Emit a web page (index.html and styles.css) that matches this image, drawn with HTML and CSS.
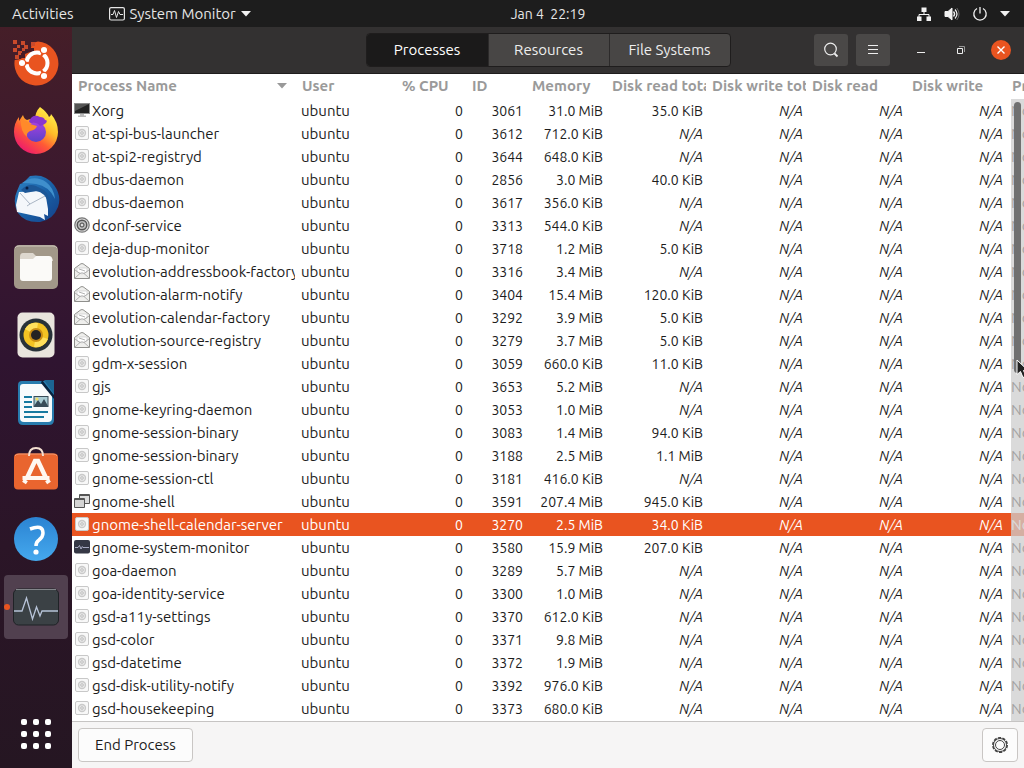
FILE: index.html
```html
<!DOCTYPE html>
<html lang="en">
<head>
<meta charset="utf-8">
<title>System Monitor</title>
<link rel="stylesheet" href="styles.css">
</head>
<body>
<svg class="sprite" aria-hidden="true">
  <symbol id="gear" viewBox="0 0 16 16">
    <rect x="1.500" y="1.500" width="13" height="13" rx="1.500" fill="#f8f8f8" stroke="#c8c8c8"/>
    <circle cx="8" cy="8" r="3.500" fill="#e8e8e8" stroke="#cacaca" stroke-width="1.300"/>
    <circle cx="8" cy="8" r="1.300" fill="#f4f4f4" stroke="#b0b0b0" stroke-width=".8"/>
  </symbol>
  <symbol id="screen" viewBox="0 0 16 16">
    <rect x="0" y="1" width="16" height="11" fill="#8d8d8d"/>
    <rect x="1" y="2" width="14" height="9" fill="#222"/>
    <path d="M1 2h14L1 9z" fill="#555"/>
    <path d="M6 12h4v1.500h2V15H4v-1.500h2z" fill="#bbb"/>
  </symbol>
  <symbol id="dconf" viewBox="0 0 16 16">
    <circle cx="8" cy="8" r="7.200" fill="#ddd" stroke="#777" stroke-width="1.200"/>
    <circle cx="8" cy="8" r="4.800" fill="#bbb" stroke="#555" stroke-width="1.400"/>
    <circle cx="8" cy="8" r="2" fill="#ddd" stroke="#444"/>
  </symbol>
  <symbol id="mail" viewBox="0 0 16 16">
    <path d="M.5 5.500 7 .7h2l6.500 4.800v10H.5z" fill="#efefed" stroke="#8f8f8c"/>
    <path d="M3 5h10v4l-5 2-5-2z" fill="#fff" stroke="#ccc" stroke-width=".7"/>
    <path d="m1 15 5-4.500L1 7m14 8-5-4.500L15 7M6 10.500q2-1.500 4 0M5 6l6 2" fill="none" stroke="#aaa" stroke-width=".9"/>
  </symbol>
  <symbol id="windows" viewBox="0 0 16 16">
    <path d="M5.500 1.500h10v9h-10z" fill="#ddd" stroke="#555"/>
    <path d="M5 2.500h11" stroke="#555"/>
    <path d="M.5 5.500h10v9H.5z" fill="#d5d5d5" stroke="#555"/>
    <path d="M0 6.500h11" stroke="#555"/>
  </symbol>
  <symbol id="monitor" viewBox="0 0 16 16">
    <rect x="0" y="1" width="16" height="13.500" rx="2" fill="#353745"/>
    <path d="M1 8.500h3l1.500-2 1.500 3.500 1.300-2.500.7 1h6" fill="none" stroke="#b4b7d0" stroke-width=".9"/>
  </symbol>
</svg>

<header class="topbar">
  <div class="topbar-left">
    <button class="plain">Activities</button>
    <button class="plain app-menu">
      <svg width="16" height="14" viewBox="0 0 16 14" fill="none" stroke="#e6e6e6"><rect x=".6" y=".6" width="14.800" height="12.400" rx="1.500" stroke-width="1.200"/><path d="M2 7.500h2l1.500-4 2 7 2-6 1.500 3h3"/></svg>
      System Monitor
      <svg width="10" height="6" viewBox="0 0 10 6"><path d="M0 0h10L5 5.500z" fill="#f2f2f2"/></svg>
    </button>
  </div>
  <button class="plain clock">Jan 4&nbsp; 22:19</button>
  <button class="plain status" aria-label="System menu">
    <svg width="16" height="16" viewBox="0 0 16 16"><path d="M5.500 1.500h5v4.500h-5zM1 10.500h4.500V15H1zM10.500 10.500H15V15h-4.500z" fill="#f2f2f2"/><path d="M8 6v3M3 11V8.500h10V11" fill="none" stroke="#f2f2f2"/></svg>
    <svg width="16" height="16" viewBox="0 0 16 16" fill="none" stroke="#f2f2f2"><path d="M1 5.500h3L8 2v12l-4-3.500H1z" fill="#f2f2f2"/><path d="M9.500 5.500q2.200 2.500 0 5" stroke-width="1.300"/><path d="M11 3.500q4 4.500 0 9" stroke-width="1.200"/><path d="M12.800 2q4.500 6 0 12" opacity=".35"/></svg>
    <svg width="16" height="16" viewBox="0 0 16 16" fill="none" stroke="#f2f2f2" stroke-width="1.300"><path d="M5 2.500a6.200 6.200 0 1 0 6 0M8 1v6.500"/></svg>
    <svg width="10" height="6" viewBox="0 0 10 6"><path d="M0 0h10L5 5.500z" fill="#f2f2f2"/></svg>
  </button>
</header>

<div class="desktop">
<nav class="dock" aria-label="Dock">
  <button class="dock-item" aria-label="Ubuntu">
    <svg width="48" height="48" viewBox="0 0 48 48"><path d="M26 2.500A22 22 0 1 1 2.700 21L9 20l4-5 5-2 2-9z" fill="#e95420"/><g fill="#c94a2b"><path d="M1 1h4v4H1zM9 2h4v4H9zM5 6h3v3H5zM1 9h4v4H1zM12 6h4v4h-4zM19 3h4v4h-4zM6 12h4v4H6zM3 16h4v4H3zM10 9h3v3h-3z"/></g><path d="M16 9h6v4h-6zM9 14h4v5H9z" fill="#4a1b25"/><circle cx="25" cy="24" r="10.500" fill="none" stroke="#fff" stroke-width="4" stroke-dasharray="19.500 2.500" stroke-dashoffset="-12"/><g fill="#fff" stroke="#e95420" stroke-width="1.300"><circle cx="10" cy="24" r="3.700"/><circle cx="32" cy="11" r="3.700"/><circle cx="32" cy="37" r="3.700"/></g></svg>
  </button>
  <button class="dock-item" aria-label="Firefox">
    <svg width="48" height="48" viewBox="0 0 48 48"><defs><linearGradient id="fx" x1=".85" y1=".1" x2=".25" y2=".95"><stop offset="0" stop-color="#fff04b"/><stop offset=".35" stop-color="#ffbd29"/><stop offset=".65" stop-color="#ff5a35"/><stop offset="1" stop-color="#ee1d6b"/></linearGradient><linearGradient id="fp" x1="0" y1="0" x2="0" y2="1"><stop offset="0" stop-color="#a541e0"/><stop offset="1" stop-color="#5b42c8"/></linearGradient></defs><path d="M28 0q7 5 9 10 2-1 2-3 7 8 7 18a22 22 0 0 1-44 0q0-9 5-15v4l4-6q1 4 4 5 5-2 8 0 0-8 5-13z" fill="url(#fx)"/><circle cx="24" cy="25" r="10" fill="url(#fp)"/><path d="M17 14q4-8 11-4 4 0 5 3 3 0 1 3-2 2-6 3-3-4-8-3-3 0-3-2z" fill="#8a35cf"/><path d="M9 13q6 0 9 4l7 2q-1 4-7 5-4 2-3 6-7-6-6-17z" fill="#ff8a2a"/></svg>
  </button>
  <button class="dock-item" aria-label="Thunderbird">
    <svg width="48" height="48" viewBox="0 0 48 48"><defs><linearGradient id="tb" x1="0" y1="0" x2="1" y2="1"><stop offset="0" stop-color="#2f83c5"/><stop offset=".5" stop-color="#1a62a8"/><stop offset="1" stop-color="#143f88"/></linearGradient></defs><path d="M18 1q15-3 24 9 8 11 4 22-5 13-18 15-15 1-22-9-6-11-1-22l3-7 3-1z" fill="url(#tb)"/><path d="M10 8Q22-1 34 7q8 6 9 17Q37 11 24 9q-8-1-14-1z" fill="#3f8fcc"/><path d="m7 17 21-1q6 1 6 6l2 12v7l-4-2 1 6-5-3-23-5-1-7z" fill="#f4f7fb"/><path d="m8 18 10 11 15-8M18 29l-3 2" fill="none" stroke="#aab6c5"/><path d="M9 15q7-7 15-4l8 4q6 5 5 14-4-12-13-13l-11 2z" fill="#1c5797"/><circle cx="15" cy="13" r="1.500" fill="#071e44"/></svg>
  </button>
  <button class="dock-item" aria-label="Files">
    <svg width="48" height="48" viewBox="0 0 48 48"><rect x="2" y="2" width="44" height="44" rx="5" fill="#a29889"/><path d="M3 5q1-2 4-2h34q3 0 4 2" fill="none" stroke="#c9c2b7"/><path d="M8 14q0-4 3-4h10l4 4h12q4 0 4 4H8z" fill="#ddd7ce"/><path d="M8 16h13l3-3h13q3 0 3 3v19q0 3-3 3H11q-3 0-3-3z" fill="#fbfaf8"/></svg>
  </button>
  <button class="dock-item" aria-label="Rhythmbox">
    <svg width="48" height="48" viewBox="0 0 48 48"><rect x="5.500" y="1.500" width="37" height="45" rx="5" fill="#e9e5dd"/><circle cx="24" cy="24" r="16.500" fill="#283238"/><circle cx="24" cy="24" r="12.500" fill="#f3c323"/><path d="M24 24 13 18a12.500 12.500 0 0 1 13-6zM24 24l12 4a12.500 12.500 0 0 1-14 8z" fill="#ffe05c"/><circle cx="24" cy="24" r="7" fill="#c98d13"/><circle cx="24" cy="24" r="5" fill="#252323"/></svg>
  </button>
  <button class="dock-item" aria-label="LibreOffice Writer">
    <svg width="48" height="48" viewBox="0 0 48 48"><path d="M10 2h25l7 9v30q0 5-5 5H11q-5 0-5-5V6q0-4 4-4z" fill="#287cae"/><path d="M11 5h21l8 11v23q0 4-4 4H12q-4 0-4-4V8q0-3 3-3z" fill="#f8fbfc"/><path d="M32 1h10v14z" fill="#1c6593"/><path d="m30 1 12 15v4L29 4z" fill="#082340"/><path d="M12 18h8m-8 5h8m-8 5h8m-8 5h24m-24 5h20" stroke="#177aa0" stroke-width="1.800"/><rect x="22" y="17.500" width="14" height="10" fill="#a9ccd4" stroke="#394d59"/><path d="m22 27 4-6 3 4 3-5 4 7z" fill="#394d59"/><circle cx="25" cy="20" r="1.500" fill="#f4df62"/></svg>
  </button>
  <button class="dock-item" aria-label="Ubuntu Software">
    <svg width="48" height="48" viewBox="0 0 48 48"><rect x="2" y="6.500" width="44" height="36" rx="4" fill="#e9652f"/><path d="M3 9q1-2 4-2h34q3 0 4 2" fill="none" stroke="#f39a70"/><path d="M17 9q0-8 7-8t7 8" fill="none" stroke="#f4dfd0" stroke-width="2"/><path d="M15 31 23 14h3l8 17M12 36l2-3m21 0 2 3" fill="none" stroke="#fff8f2" stroke-width="4.500"/><path d="M10.500 29h27v4h-27z" fill="#fff8f2"/></svg>
  </button>
  <button class="dock-item" aria-label="Help">
    <svg width="48" height="48" viewBox="0 0 48 48"><defs><linearGradient id="hp" x1="0" y1="0" x2="0" y2="1"><stop offset="0" stop-color="#2b83d2"/><stop offset="1" stop-color="#45a9ee"/></linearGradient></defs><circle cx="24" cy="24" r="22" fill="url(#hp)"/><path d="M18 14q13-5 13 4 0 4-4 7-3 2-3 6" fill="none" stroke="#fff" stroke-width="3.500"/><circle cx="24" cy="37" r="2.600" fill="#fff"/></svg>
  </button>
  <button class="dock-item running" aria-label="System Monitor">
    <svg width="48" height="48" viewBox="0 0 48 48"><rect x="1.500" y="6" width="45" height="36" rx="5" fill="#3b4145" stroke="#1f2226"/><path d="M4 6.500h40" stroke="#82868a"/><path d="M2 28h8l4.500-13 6 21 4-12 3.500 9 2-5h16" fill="none" stroke="#b7c3d8" stroke-width="1.300"/></svg>
  </button>
  <button class="dock-apps" aria-label="Show Applications">
    <i></i><i></i><i></i><i></i><i></i><i></i><i></i><i></i><i></i>
  </button>
</nav>

<main class="window">
  <div class="headerbar">
    <div class="tabs">
      <button class="tab active">Processes</button>
      <button class="tab">Resources</button>
      <button class="tab">File Systems</button>
    </div>
    <div class="actions">
      <button class="tool" aria-label="Search"><svg width="16" height="16" viewBox="0 0 16 16" fill="none" stroke="#eee" stroke-width="1.200"><circle cx="7.500" cy="7" r="5.800"/><path d="m11.500 11.500 3 3" stroke-width="1.800"/></svg></button>
      <button class="tool" aria-label="Menu"><svg width="16" height="16" viewBox="0 0 16 16" stroke="#eee"><path d="M3 3.500h10M3 7.500h10M3 11.500h10"/></svg></button>
      <div class="controls">
        <button class="control" aria-label="Minimize"><svg width="8" height="8" viewBox="0 0 8 8"><path d="M0 6.500h8" stroke="#eee"/></svg></button>
        <button class="control" aria-label="Restore"><svg width="8" height="8" viewBox="0 0 8 8" fill="none"><path d="M2 .5h5.500V6" stroke="#999"/><path d="M.5 2.500h5v5h-5z" stroke="#eee"/></svg></button>
        <button class="control close" aria-label="Close"><svg width="8" height="8" viewBox="0 0 8 8"><path d="m.5.5 7 7m0-7-7 7" stroke="#fff" stroke-width="1.400"/></svg></button>
      </div>
    </div>
  </div>

  <div class="process-list">
    <table class="processes">
      <colgroup><col class="c-name"><col class="c-wide"><col class="c-cpu"><col class="c-id"><col class="c-mem"><col class="c-wide"><col class="c-wide"><col class="c-wide"><col class="c-wide"><col class="c-mem"></colgroup>
      <thead>
        <tr><th><span class="sorted">Process Name <svg width="10" height="6" viewBox="0 0 10 6"><path d="M0 0h10L5 5.500z" fill="#999"/></svg></span></th><th>User</th><th class="end">% CPU</th><th>ID</th><th>Memory</th><th>Disk read total</th><th>Disk write total</th><th>Disk read</th><th>Disk write</th><th>Priority</th></tr>
      </thead>
      <tbody>
        <tr><td><svg><use href="#screen"/></svg>Xorg</td><td>ubuntu</td><td>0</td><td>3061</td><td>31.0 MiB</td><td>35.0 KiB</td><td><em>N/A</em></td><td><em>N/A</em></td><td><em>N/A</em></td><td>Normal</td></tr>
        <tr><td><svg><use href="#gear"/></svg>at-spi-bus-launcher</td><td>ubuntu</td><td>0</td><td>3612</td><td>712.0 KiB</td><td><em>N/A</em></td><td><em>N/A</em></td><td><em>N/A</em></td><td><em>N/A</em></td><td>Normal</td></tr>
        <tr><td><svg><use href="#gear"/></svg>at-spi2-registryd</td><td>ubuntu</td><td>0</td><td>3644</td><td>648.0 KiB</td><td><em>N/A</em></td><td><em>N/A</em></td><td><em>N/A</em></td><td><em>N/A</em></td><td>Normal</td></tr>
        <tr><td><svg><use href="#gear"/></svg>dbus-daemon</td><td>ubuntu</td><td>0</td><td>2856</td><td>3.0 MiB</td><td>40.0 KiB</td><td><em>N/A</em></td><td><em>N/A</em></td><td><em>N/A</em></td><td>Normal</td></tr>
        <tr><td><svg><use href="#gear"/></svg>dbus-daemon</td><td>ubuntu</td><td>0</td><td>3617</td><td>356.0 KiB</td><td><em>N/A</em></td><td><em>N/A</em></td><td><em>N/A</em></td><td><em>N/A</em></td><td>Normal</td></tr>
        <tr><td><svg><use href="#dconf"/></svg>dconf-service</td><td>ubuntu</td><td>0</td><td>3313</td><td>544.0 KiB</td><td><em>N/A</em></td><td><em>N/A</em></td><td><em>N/A</em></td><td><em>N/A</em></td><td>Normal</td></tr>
        <tr><td><svg><use href="#gear"/></svg>deja-dup-monitor</td><td>ubuntu</td><td>0</td><td>3718</td><td>1.2 MiB</td><td>5.0 KiB</td><td><em>N/A</em></td><td><em>N/A</em></td><td><em>N/A</em></td><td>Normal</td></tr>
        <tr><td><svg><use href="#mail"/></svg>evolution-addressbook-factory</td><td>ubuntu</td><td>0</td><td>3316</td><td>3.4 MiB</td><td><em>N/A</em></td><td><em>N/A</em></td><td><em>N/A</em></td><td><em>N/A</em></td><td>Normal</td></tr>
        <tr><td><svg><use href="#mail"/></svg>evolution-alarm-notify</td><td>ubuntu</td><td>0</td><td>3404</td><td>15.4 MiB</td><td>120.0 KiB</td><td><em>N/A</em></td><td><em>N/A</em></td><td><em>N/A</em></td><td>Normal</td></tr>
        <tr><td><svg><use href="#mail"/></svg>evolution-calendar-factory</td><td>ubuntu</td><td>0</td><td>3292</td><td>3.9 MiB</td><td>5.0 KiB</td><td><em>N/A</em></td><td><em>N/A</em></td><td><em>N/A</em></td><td>Normal</td></tr>
        <tr><td><svg><use href="#mail"/></svg>evolution-source-registry</td><td>ubuntu</td><td>0</td><td>3279</td><td>3.7 MiB</td><td>5.0 KiB</td><td><em>N/A</em></td><td><em>N/A</em></td><td><em>N/A</em></td><td>Normal</td></tr>
        <tr><td><svg><use href="#gear"/></svg>gdm-x-session</td><td>ubuntu</td><td>0</td><td>3059</td><td>660.0 KiB</td><td>11.0 KiB</td><td><em>N/A</em></td><td><em>N/A</em></td><td><em>N/A</em></td><td>Normal</td></tr>
        <tr><td><svg><use href="#gear"/></svg>gjs</td><td>ubuntu</td><td>0</td><td>3653</td><td>5.2 MiB</td><td><em>N/A</em></td><td><em>N/A</em></td><td><em>N/A</em></td><td><em>N/A</em></td><td>Normal</td></tr>
        <tr><td><svg><use href="#gear"/></svg>gnome-keyring-daemon</td><td>ubuntu</td><td>0</td><td>3053</td><td>1.0 MiB</td><td><em>N/A</em></td><td><em>N/A</em></td><td><em>N/A</em></td><td><em>N/A</em></td><td>Normal</td></tr>
        <tr><td><svg><use href="#gear"/></svg>gnome-session-binary</td><td>ubuntu</td><td>0</td><td>3083</td><td>1.4 MiB</td><td>94.0 KiB</td><td><em>N/A</em></td><td><em>N/A</em></td><td><em>N/A</em></td><td>Normal</td></tr>
        <tr><td><svg><use href="#gear"/></svg>gnome-session-binary</td><td>ubuntu</td><td>0</td><td>3188</td><td>2.5 MiB</td><td>1.1 MiB</td><td><em>N/A</em></td><td><em>N/A</em></td><td><em>N/A</em></td><td>Normal</td></tr>
        <tr><td><svg><use href="#gear"/></svg>gnome-session-ctl</td><td>ubuntu</td><td>0</td><td>3181</td><td>416.0 KiB</td><td><em>N/A</em></td><td><em>N/A</em></td><td><em>N/A</em></td><td><em>N/A</em></td><td>Normal</td></tr>
        <tr><td><svg><use href="#windows"/></svg>gnome-shell</td><td>ubuntu</td><td>0</td><td>3591</td><td>207.4 MiB</td><td>945.0 KiB</td><td><em>N/A</em></td><td><em>N/A</em></td><td><em>N/A</em></td><td>Normal</td></tr>
        <tr class="selected"><td><svg><use href="#gear"/></svg>gnome-shell-calendar-server</td><td>ubuntu</td><td>0</td><td>3270</td><td>2.5 MiB</td><td>34.0 KiB</td><td><em>N/A</em></td><td><em>N/A</em></td><td><em>N/A</em></td><td>Normal</td></tr>
        <tr><td><svg><use href="#monitor"/></svg>gnome-system-monitor</td><td>ubuntu</td><td>0</td><td>3580</td><td>15.9 MiB</td><td>207.0 KiB</td><td><em>N/A</em></td><td><em>N/A</em></td><td><em>N/A</em></td><td>Normal</td></tr>
        <tr><td><svg><use href="#gear"/></svg>goa-daemon</td><td>ubuntu</td><td>0</td><td>3289</td><td>5.7 MiB</td><td><em>N/A</em></td><td><em>N/A</em></td><td><em>N/A</em></td><td><em>N/A</em></td><td>Normal</td></tr>
        <tr><td><svg><use href="#gear"/></svg>goa-identity-service</td><td>ubuntu</td><td>0</td><td>3300</td><td>1.0 MiB</td><td><em>N/A</em></td><td><em>N/A</em></td><td><em>N/A</em></td><td><em>N/A</em></td><td>Normal</td></tr>
        <tr><td><svg><use href="#gear"/></svg>gsd-a11y-settings</td><td>ubuntu</td><td>0</td><td>3370</td><td>612.0 KiB</td><td><em>N/A</em></td><td><em>N/A</em></td><td><em>N/A</em></td><td><em>N/A</em></td><td>Normal</td></tr>
        <tr><td><svg><use href="#gear"/></svg>gsd-color</td><td>ubuntu</td><td>0</td><td>3371</td><td>9.8 MiB</td><td><em>N/A</em></td><td><em>N/A</em></td><td><em>N/A</em></td><td><em>N/A</em></td><td>Normal</td></tr>
        <tr><td><svg><use href="#gear"/></svg>gsd-datetime</td><td>ubuntu</td><td>0</td><td>3372</td><td>1.9 MiB</td><td><em>N/A</em></td><td><em>N/A</em></td><td><em>N/A</em></td><td><em>N/A</em></td><td>Normal</td></tr>
        <tr><td><svg><use href="#gear"/></svg>gsd-disk-utility-notify</td><td>ubuntu</td><td>0</td><td>3392</td><td>976.0 KiB</td><td><em>N/A</em></td><td><em>N/A</em></td><td><em>N/A</em></td><td><em>N/A</em></td><td>Normal</td></tr>
        <tr><td><svg><use href="#gear"/></svg>gsd-housekeeping</td><td>ubuntu</td><td>0</td><td>3373</td><td>680.0 KiB</td><td><em>N/A</em></td><td><em>N/A</em></td><td><em>N/A</em></td><td><em>N/A</em></td><td>Normal</td></tr>
      </tbody>
    </table>
    <div class="scrollbar"><div class="thumb"></div></div>
    <svg class="pointer" width="14" height="20" viewBox="0 0 14 20"><path d="M1 1v14.500l3.500-3 2.500 6 3-1.300-2.500-5.700H12z" fill="#222" stroke="#fff"/></svg>
  </div>

  <footer class="actionbar">
    <button class="end-process">End Process</button>
    <button class="properties" aria-label="Process Properties"><svg width="18" height="18" viewBox="0 0 18 18" fill="none" stroke="#444"><circle cx="9" cy="9" r="7.200" stroke-width="1.600" stroke-dasharray="3.200 1.320"/><circle cx="9" cy="9" r="6.500"/><circle cx="9" cy="9" r="4.500"/></svg></button>
  </footer>
</main>
</div>
</body>
</html>
```
FILE: styles.css
```css
* { box-sizing: border-box; }

body {
  margin: 0;
  height: 100vh;
  display: flex;
  flex-direction: column;
  overflow: hidden;
  font: 15px/20px Ubuntu, "Noto Sans", sans-serif;
  color: #1c1c1c;
  background: #2b1527;
}

button { font: inherit; color: inherit; border: 0; margin: 0; padding: 0; background: none; }
svg { flex: none; display: block; }
.sprite { position: absolute; width: 0; height: 0; }

/* Top panel */
.topbar {
  display: grid;
  grid-template-columns: 1fr auto 1fr;
  align-items: center;
  height: 27px;
  padding: 0 14px 0 12px;
  background: #1d1d1d;
  color: #e6e6e6;
}
.topbar-left { display: flex; gap: 35px; }
.plain { display: flex; align-items: center; }
.app-menu { gap: 5px; }
.clock { padding-left: 74px; font-size: 14px; }
.status { justify-self: end; gap: 12px; }

.desktop { flex: 1; min-height: 0; display: flex; }

/* Dock */
.dock {
  flex: none;
  width: 72px;
  display: flex;
  flex-direction: column;
  gap: 4px;
  padding: 4px 4px 11px;
  background: linear-gradient(#451e28, #3a1830 25%, #2f1430 45%, #2b1527 70%, #251622);
}
.dock-item {
  height: 64px;
  display: grid;
  place-items: center;
  border-radius: 4px;
}
.running { position: relative; background: #51404f; }
.running::before {
  content: "";
  position: absolute;
  left: 0;
  top: 29px;
  width: 6px;
  height: 6px;
  border-radius: 50%;
  background: #e95420;
}
.dock-apps {
  margin: auto auto 8px;
  display: grid;
  grid-template-columns: repeat(3, 6px);
  gap: 6px;
}
.dock-apps i { height: 6px; border-radius: 2px; background: #fff; }

/* Window */
.window {
  flex: 1;
  min-width: 0;
  display: flex;
  flex-direction: column;
  background: #fff;
}
.headerbar {
  display: grid;
  grid-template-columns: 1fr auto 1fr;
  align-items: center;
  height: 47px;
  padding: 0 13px;
  background: #333131;
  border-bottom: 1px solid #1f1d1d;
  color: #eee;
}
.tabs { grid-column: 2; display: flex; border: 1px solid #1f1d1d; border-radius: 4px; overflow: hidden; background: #484645; }
.tab { width: 121px; height: 32px; border-left: 1px solid #2c2a2a; }
.tab:first-child { border-left: 0; }
.tab.active { background: #1b1a1a; color: #fff; }
.actions { justify-self: end; display: flex; gap: 8px; }
.tool {
  display: grid;
  place-items: center;
  width: 34px;
  height: 32px;
  border-radius: 3px;
  background: #4a4847;
}
.controls { display: flex; align-items: center; gap: 20px; margin-left: 13px; }
.control { width: 20px; height: 20px; display: grid; place-items: center; border-radius: 50%; }
.close { background: #e95420; }

/* Process table */
.process-list { position: relative; flex: 1; min-height: 0; overflow: hidden; }
.processes {
  table-layout: fixed;
  width: 100%;
  min-width: 1015px;
  border-collapse: separate;
  border-spacing: 0;
  white-space: nowrap;
}
.c-name { width: 225px; }
.c-wide { width: 100px; }
.c-cpu { width: 70px; }
.c-id { width: 60px; }
.c-mem { width: 80px; }
.processes th {
  height: 25px;
  padding: 0 0 2px 5px;
  border-right: 1px solid transparent;
  overflow: hidden;
  text-align: left;
  color: #9a9a9a;
}
.processes th:first-child { padding: 0 9px 2px 6px; }
.processes th.end { padding-right: 19px; text-align: right; }
.sorted { display: flex; align-items: center; justify-content: space-between; }
.processes td {
  height: 23px;
  padding: 0 4px 0 0;
  overflow: hidden;
  text-align: right;
  font-size: 14px;
}
.processes td:nth-child(1) { padding: 0 0 0 2px; border-right: 2px solid transparent; text-align: left; font-size: 15px; }
.processes td:nth-child(2), .processes td:nth-child(10) { padding-left: 4px; text-align: left; font-size: 15px; }
.processes td svg { display: inline-block; width: 16px; height: 16px; margin-right: 2px; vertical-align: -2px; }
.selected td { background: #e95420; color: #fff; }

.scrollbar {
  position: absolute;
  top: 25px;
  right: 0;
  bottom: 0;
  width: 13px;
  padding: 3px 2px;
  background: rgba(205, 205, 205, .75);
}
.thumb { width: 7px; height: 44%; margin: auto; border-radius: 4px; background: #707070; }
.pointer { position: absolute; top: 285px; right: -6px; }

.actionbar {
  display: flex;
  justify-content: space-between;
  padding: 6px;
  background: #f6f5f5;
  border-top: 1px solid #c6c4c3;
}
.end-process, .properties {
  height: 34px;
  border: 1px solid #c9c6c4;
  border-radius: 4px;
  background: #fcfcfc;
}
.end-process { padding: 0 16px; }
.properties { width: 36px; display: grid; place-items: center; }
```
